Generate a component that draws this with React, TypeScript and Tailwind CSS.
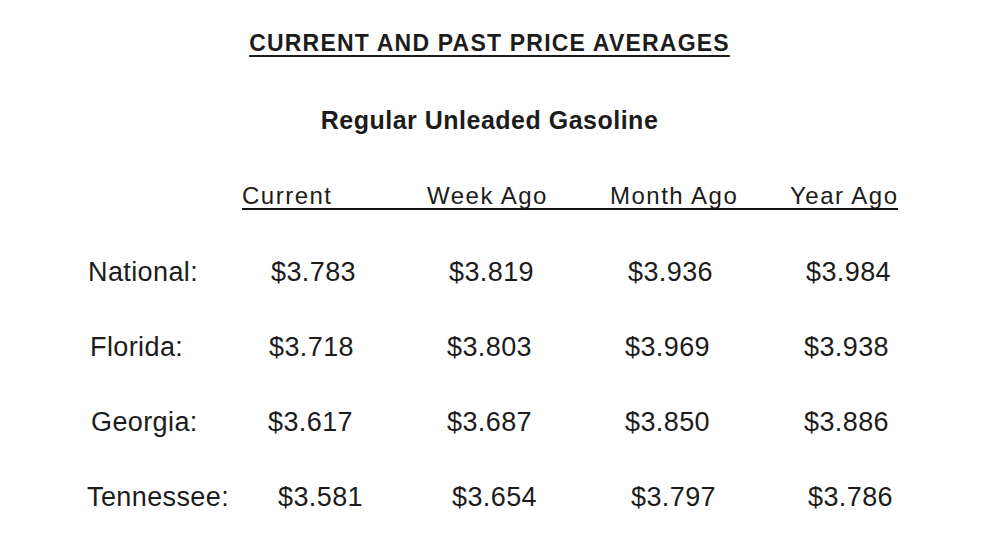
import React from "react";

type Row = {
  label: string;
  labelCls: string;
  cells: { v: string; cls: string }[];
};

const rows: Row[] = [
  {
    label: "National:",
    labelCls: "pl-[88px] w-[271px]",
    cells: [
      { v: "$3.783", cls: "w-[178px]" },
      { v: "$3.819", cls: "w-[179px]" },
      { v: "$3.936", cls: "w-[178px]" },
      { v: "$3.984", cls: "" },
    ],
  },
  {
    label: "Florida:",
    labelCls: "pl-[90px] w-[269px]",
    cells: [
      { v: "$3.718", cls: "w-[178px]" },
      { v: "$3.803", cls: "w-[178px]" },
      { v: "$3.969", cls: "w-[179px]" },
      { v: "$3.938", cls: "" },
    ],
  },
  {
    label: "Georgia:",
    labelCls: "pl-[91px] w-[268px]",
    cells: [
      { v: "$3.617", cls: "w-[179px]" },
      { v: "$3.687", cls: "w-[178px]" },
      { v: "$3.850", cls: "w-[179px]" },
      { v: "$3.886", cls: "" },
    ],
  },
  {
    label: "Tennessee:",
    labelCls: "pl-[87px] w-[278px]",
    cells: [
      { v: "$3.581", cls: "w-[174px]" },
      { v: "$3.654", cls: "w-[179px]" },
      { v: "$3.797", cls: "w-[177px]" },
      { v: "$3.786", cls: "" },
    ],
  },
];

export default function App() {
  return (
    <div
      className="w-[986px] h-[553px] bg-white text-[#1c1c1c] overflow-hidden"
      style={{ fontFamily: '"Liberation Sans", Arial, sans-serif' }}
    >
      <div className="pt-[32px] flex flex-col items-center pr-[7px]">
        <div className="text-[23px] leading-[23px] font-bold tracking-[1.2px] underline decoration-2 underline-offset-[4px] whitespace-nowrap">
          CURRENT AND PAST PRICE AVERAGES
        </div>
        <div className="mt-[53px] text-[25px] leading-[25px] font-bold tracking-[0.5px] whitespace-nowrap">
          Regular Unleaded Gasoline
        </div>
      </div>

      <div className="mt-[51px] ml-[242px] w-[656px] flex border-b-2 border-[#111] text-[24px] leading-[24px] tracking-[1.5px] whitespace-nowrap">
        <div className="w-[185px] shrink-0">Current</div>
        <div className="w-[183px] shrink-0">Week Ago</div>
        <div className="w-[180px] shrink-0">Month Ago</div>
        <div className="shrink-0">Year Ago</div>
      </div>

      <div className="mt-[49px] flex flex-col gap-[48px] text-[27px] leading-[27px] tracking-[0.4px] whitespace-nowrap">
        {rows.map((r) => (
          <div key={r.label} className="flex">
            <div className={`${r.labelCls} shrink-0`}>{r.label}</div>
            {r.cells.map((c, i) => (
              <div key={i} className={`${c.cls} shrink-0`}>
                {c.v}
              </div>
            ))}
          </div>
        ))}
      </div>
    </div>
  );
}
